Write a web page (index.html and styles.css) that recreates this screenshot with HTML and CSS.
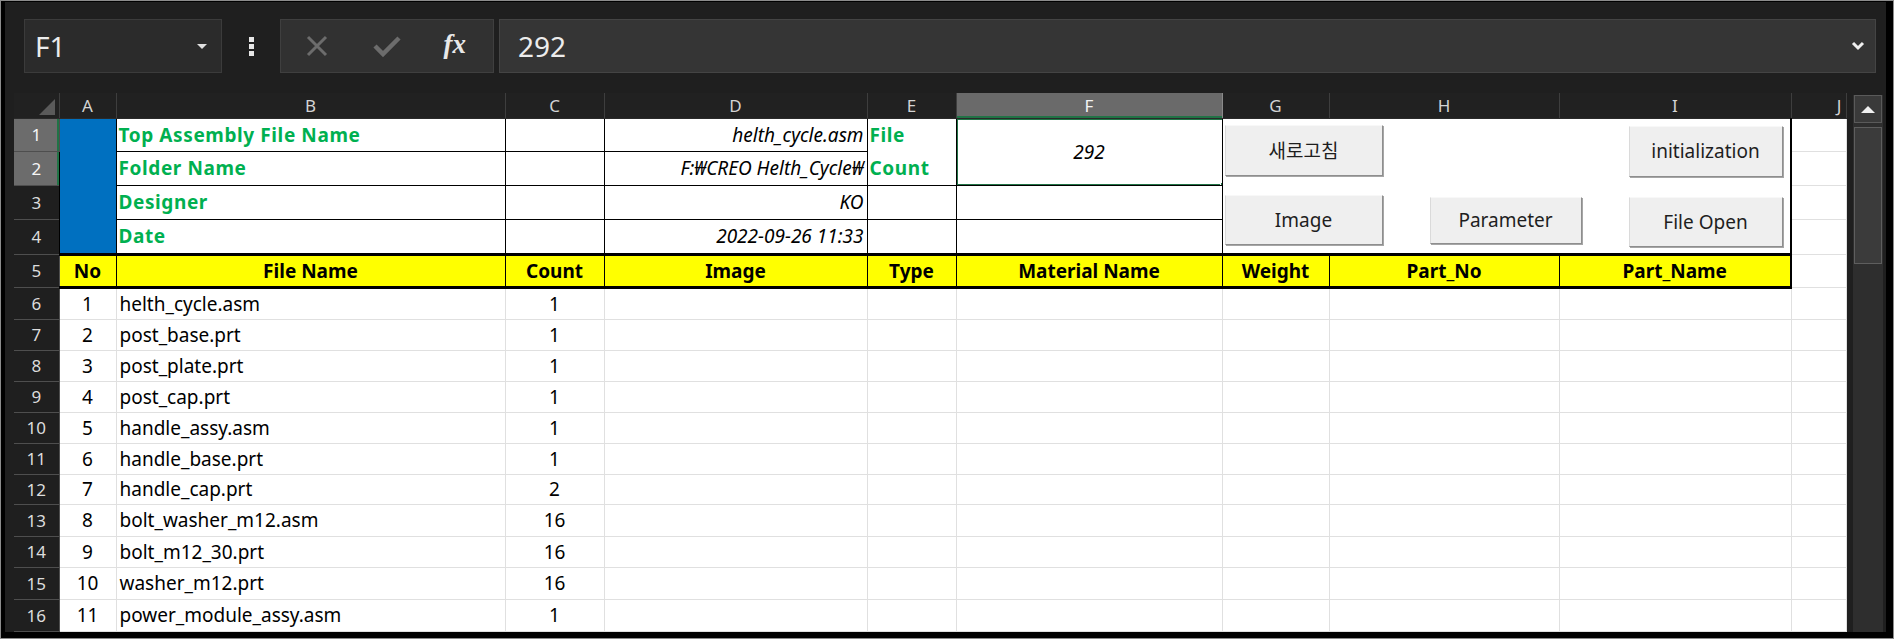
FILE: index.html
```html
<html>

<head>
    <title>Part List</title>
    <link rel="stylesheet" href="styles.css">
</head>

<body>
    <div class="frame">
        <div class="app">
            <div class="formulaBar">
                <div class="nameBox">
                    <span class="nameText">F1</span>
                    <span class="nameArrow"></span>
                </div>
                <div class="dots"><span></span><span></span><span></span></div>
                <div class="editBox">
                    <svg class="editIcon" width="26" height="26" viewBox="0 0 26 26">
                        <path d="M4 4 L22 22 M22 4 L4 22" stroke="#6c6c6c" stroke-width="3" fill="none" />
                    </svg>
                    <svg class="editIcon" width="30" height="26" viewBox="0 0 30 26">
                        <path d="M3 13 L11 21 L27 5" stroke="#6c6c6c" stroke-width="4.5" fill="none" />
                    </svg>
                    <span class="fx">fx</span>
                </div>
                <div class="formulaInput">
                    <span class="formulaText">292</span>
                    <svg class="chevron" width="14" height="10" viewBox="0 0 14 10">
                        <path d="M2 2 L7 7 L12 2" stroke="#f0f0f0" stroke-width="3" fill="none" />
                    </svg>
                </div>
            </div>

            <div class="sheetArea">
                <table class="grid">
                    <colgroup>
                        <col style="width:45px">
                        <col style="width:57px">
                        <col style="width:389px">
                        <col style="width:99px">
                        <col style="width:263px">
                        <col style="width:89px">
                        <col style="width:266px">
                        <col style="width:107px">
                        <col style="width:230px">
                        <col style="width:232px">
                        <col style="width:55px">
                    </colgroup>
                    <tr class="colHead">
                        <th class="corner"><span class="cornerMark"></span></th>
                        <th>A</th>
                        <th>B</th>
                        <th>C</th>
                        <th>D</th>
                        <th>E</th>
                        <th class="picked">F</th>
                        <th>G</th>
                        <th>H</th>
                        <th>I</th>
                        <th class="colJ">J</th>
                    </tr>
                    <tr class="r1">
                        <th class="rowHead pickedRow">1</th>
                        <td class="blue box" rowspan="4"></td>
                        <td class="label box">Top Assembly File Name</td>
                        <td class="box"></td>
                        <td class="value box">helth_cycle.asm</td>
                        <td class="label box noBottom">File</td>
                        <td class="selected box" rowspan="2">292<span class="handle"></span></td>
                        <td class="controlsCell box" colspan="3" rowspan="4">
                            <div class="controls">
                                <button class="formBtn btnRefresh">새로고침</button>
                                <button class="formBtn btnImage">Image</button>
                                <button class="formBtn btnParam">Parameter</button>
                                <button class="formBtn btnInit">initialization</button>
                                <button class="formBtn btnOpen">File Open</button>
                            </div>
                        </td>
                        <td class="plain"></td>
                    </tr>
                    <tr class="r2">
                        <th class="rowHead pickedRow">2</th>
                        <td class="label box">Folder Name</td>
                        <td class="box"></td>
                        <td class="value box">F:₩CREO Helth_Cycle₩</td>
                        <td class="label box noTop">Count</td>
                        <td class="plain"></td>
                    </tr>
                    <tr class="r3">
                        <th class="rowHead">3</th>
                        <td class="label box">Designer</td>
                        <td class="box"></td>
                        <td class="value box">KO</td>
                        <td class="box"></td>
                        <td class="box"></td>
                        <td class="plain"></td>
                    </tr>
                    <tr class="r4">
                        <th class="rowHead">4</th>
                        <td class="label box">Date</td>
                        <td class="box"></td>
                        <td class="value box">2022-09-26 11:33</td>
                        <td class="box"></td>
                        <td class="box"></td>
                        <td class="plain"></td>
                    </tr>
                    <tr class="r5">
                        <th class="rowHead">5</th>
                        <td class="head">No</td>
                        <td class="head">File Name</td>
                        <td class="head">Count</td>
                        <td class="head">Image</td>
                        <td class="head">Type</td>
                        <td class="head">Material Name</td>
                        <td class="head">Weight</td>
                        <td class="head">Part_No</td>
                        <td class="head lastHead">Part_Name</td>
                        <td class="plain"></td>
                    </tr>
                    <tr class="data h32">
                        <th class="rowHead">6</th>
                        <td class="num">1</td><td class="name">helth_cycle.asm</td><td class="num">1</td>
                        <td></td><td></td><td></td><td></td><td></td><td></td><td></td>
                    </tr>
                    <tr class="data h31">
                        <th class="rowHead">7</th>
                        <td class="num">2</td><td class="name">post_base.prt</td><td class="num">1</td>
                        <td></td><td></td><td></td><td></td><td></td><td></td><td></td>
                    </tr>
                    <tr class="data h31">
                        <th class="rowHead">8</th>
                        <td class="num">3</td><td class="name">post_plate.prt</td><td class="num">1</td>
                        <td></td><td></td><td></td><td></td><td></td><td></td><td></td>
                    </tr>
                    <tr class="data h31">
                        <th class="rowHead">9</th>
                        <td class="num">4</td><td class="name">post_cap.prt</td><td class="num">1</td>
                        <td></td><td></td><td></td><td></td><td></td><td></td><td></td>
                    </tr>
                    <tr class="data h31">
                        <th class="rowHead">10</th>
                        <td class="num">5</td><td class="name">handle_assy.asm</td><td class="num">1</td>
                        <td></td><td></td><td></td><td></td><td></td><td></td><td></td>
                    </tr>
                    <tr class="data h31">
                        <th class="rowHead">11</th>
                        <td class="num">6</td><td class="name">handle_base.prt</td><td class="num">1</td>
                        <td></td><td></td><td></td><td></td><td></td><td></td><td></td>
                    </tr>
                    <tr class="data h30">
                        <th class="rowHead">12</th>
                        <td class="num">7</td><td class="name">handle_cap.prt</td><td class="num">2</td>
                        <td></td><td></td><td></td><td></td><td></td><td></td><td></td>
                    </tr>
                    <tr class="data h32">
                        <th class="rowHead">13</th>
                        <td class="num">8</td><td class="name">bolt_washer_m12.asm</td><td class="num">16</td>
                        <td></td><td></td><td></td><td></td><td></td><td></td><td></td>
                    </tr>
                    <tr class="data h31">
                        <th class="rowHead">14</th>
                        <td class="num">9</td><td class="name">bolt_m12_30.prt</td><td class="num">16</td>
                        <td></td><td></td><td></td><td></td><td></td><td></td><td></td>
                    </tr>
                    <tr class="data h32">
                        <th class="rowHead">15</th>
                        <td class="num">10</td><td class="name">washer_m12.prt</td><td class="num">16</td>
                        <td></td><td></td><td></td><td></td><td></td><td></td><td></td>
                    </tr>
                    <tr class="data h32">
                        <th class="rowHead">16</th>
                        <td class="num">11</td><td class="name">power_module_assy.asm</td><td class="num">1</td>
                        <td></td><td></td><td></td><td></td><td></td><td></td><td></td>
                    </tr>
                </table>

                <div class="scrollBar">
                    <div class="scrollUp"><span class="upArrow"></span></div>
                    <div class="scrollThumb"></div>
                </div>
            </div>
        </div>
    </div>
</body>

</html>
```

FILE: styles.css
```css
* {
    box-sizing: border-box;
}

body {
    margin: 0;
    background: #000;
    font-family: "Noto Sans", "Noto Sans CJK KR", sans-serif;
}

.frame {
    width: 1894px;
    height: 639px;
    background: #000;
    border: 1px solid #8c8c8c;
    padding: 1px 7px 6px 4px;
    overflow: hidden;
}

.app {
    height: 100%;
    background: #1f1f1f;
    display: flex;
    flex-direction: column;
}

/* formula bar */

.formulaBar {
    height: 91px;
    display: flex;
    align-items: flex-start;
    padding: 17px 10px 0 19px;
}

.nameBox {
    width: 198px;
    height: 54px;
    background: #2b2b2b;
    border: 1px solid #3b3b3b;
    display: flex;
    align-items: center;
    justify-content: space-between;
    padding: 0 14px 0 10px;
}

.nameText {
    color: #ececec;
    font-size: 28px;
}

.nameArrow {
    width: 0;
    height: 0;
    border-left: 5px solid transparent;
    border-right: 5px solid transparent;
    border-top: 5px solid #e0e0e0;
}

.dots {
    width: 58px;
    height: 54px;
    display: flex;
    flex-direction: column;
    align-items: center;
    justify-content: center;
    gap: 2px;
}

.dots span {
    width: 5px;
    height: 5px;
    background: #e6e6e6;
}

.editBox {
    width: 214px;
    height: 54px;
    background: #313131;
    border: 1px solid #3f3f3f;
    display: flex;
    align-items: center;
    justify-content: space-between;
    padding: 0 27px 0 23px;
}

.editIcon {
    display: block;
}

.fx {
    font-family: "Liberation Serif", serif;
    font-style: italic;
    font-weight: bold;
    font-size: 27px;
    color: #e8e8e8;
    margin-bottom: 4px;
}

.formulaInput {
    flex: 1;
    height: 54px;
    margin-left: 5px;
    background: #353535;
    border: 1px solid #444444;
    display: flex;
    align-items: center;
    justify-content: space-between;
    padding: 0 10px 0 18px;
}

.formulaText {
    color: #ececec;
    font-size: 28px;
}

/* sheet */

.sheetArea {
    flex: 1;
    display: flex;
    padding-left: 9px;
    overflow: hidden;
}

.grid {
    border-collapse: collapse;
    table-layout: fixed;
    width: 1832px;
    background: #fff;
    font-size: 19px;
    color: #000;
}

.grid td,
.grid th {
    padding: 0;
    border: 1px solid #e0e0e0;
    white-space: nowrap;
    overflow: hidden;
    vertical-align: middle;
}

.colHead {
    height: 25px;
}

.colHead th {
    background: #212121;
    color: #d4d4d4;
    font-weight: normal;
    font-size: 17px;
    border: none;
    border-right: 1px solid #3e3e3e;
    border-bottom: 1px solid #2a2a2a;
}

.colHead th.picked {
    background: #6a6a6a;
    color: #f4f4f4;
    border-right-color: #8a8a8a;
    box-shadow: inset 0 -2px 0 #217346;
}

.colHead th.colJ {
    text-align: right;
    padding-right: 4px;
}

.corner {
    position: relative;
}

.cornerMark {
    position: absolute;
    right: 4px;
    bottom: 3px;
    width: 0;
    height: 0;
    border-left: 16px solid transparent;
    border-bottom: 16px solid #5a5a5a;
}

.rowHead {
    background: #1f1f1f;
    color: #dcdcdc;
    font-weight: normal;
    font-size: 17px;
    border-color: #4e4e4e !important;
    border-left: none !important;
}

.rowHead.pickedRow {
    background: #6c6c6c;
    color: #f6f6f6;
    box-shadow: inset -2px 0 0 #217346;
}

.r1 { height: 33px; }
.r2 { height: 34px; }
.r3 { height: 34px; }
.r4 { height: 35px; }
.r5 { height: 33px; }
.h30 { height: 30px; }
.h31 { height: 31px; }
.h32 { height: 32px; }

.grid td.box {
    border: 1px solid #000;
}

.blue {
    background: #0070c0;
}

.label {
    color: #00b050;
    font-weight: bold;
    letter-spacing: 0.6px;
    padding-left: 2px !important;
}

.noBottom {
    border-bottom: none !important;
}

.noTop {
    border-top: none !important;
}

.value {
    text-align: right;
    font-style: italic;
    padding-right: 3px !important;
}

.selected {
    position: relative;
    text-align: center;
    font-style: italic;
}

.selected::after {
    content: "";
    position: absolute;
    left: -1px;
    top: -1px;
    right: -2px;
    bottom: -1px;
    border: 2px solid #217346;
}

.handle {
    position: absolute;
    right: -5px;
    bottom: -4px;
    width: 7px;
    height: 7px;
    background: #217346;
    border: 1px solid #fff;
    z-index: 2;
}

.grid td.controlsCell {
    vertical-align: top;
    border-right: 2px solid #000;
    border-bottom: none;
}

.controls {
    position: relative;
    height: 130px;
}

.formBtn {
    position: absolute;
    background: #efefef;
    border: 1px solid;
    border-color: #f8f8f8 #8e8e8e #8e8e8e #dadada;
    box-shadow: 1px 1px 0 #a6a6a6;
    font-family: "Noto Sans", "Noto Sans CJK KR", sans-serif;
    font-size: 19px;
    color: #1e1e1e;
    padding: 0;
}

.btnRefresh { left: 2px; top: 6px; width: 158px; height: 51px; }
.btnImage { left: 2px; top: 76px; width: 158px; height: 50px; }
.btnParam { left: 207px; top: 78px; width: 152px; height: 47px; }
.btnInit { left: 406px; top: 7px; width: 154px; height: 51px; }
.btnOpen { left: 406px; top: 78px; width: 154px; height: 50px; }

.grid td.head {
    background: #ffff00;
    font-weight: bold;
    text-align: center;
    border: 1px solid #000;
    border-top: 3px solid #000;
    border-bottom: 3px solid #000;
}

.grid td.lastHead {
    border-right: 2px solid #000;
}

.num {
    text-align: center;
}

.name {
    padding-left: 3px !important;
}

/* scroll bar */

.scrollBar {
    width: 30px;
    margin-left: 6px;
    margin-top: 2px;
    background: #2e2e2e;
    display: flex;
    flex-direction: column;
    padding: 0 1px;
}

.scrollUp {
    height: 28px;
    background: #3a3a3a;
    border: 1px solid #5a5a5a;
    display: flex;
    align-items: center;
    justify-content: center;
}

.upArrow {
    width: 0;
    height: 0;
    border-left: 7px solid transparent;
    border-right: 7px solid transparent;
    border-bottom: 7px solid #f0f0f0;
}

.scrollThumb {
    height: 137px;
    margin-top: 4px;
    background: #3b3b3b;
    border: 1px solid #5e5e5e;
}
```
